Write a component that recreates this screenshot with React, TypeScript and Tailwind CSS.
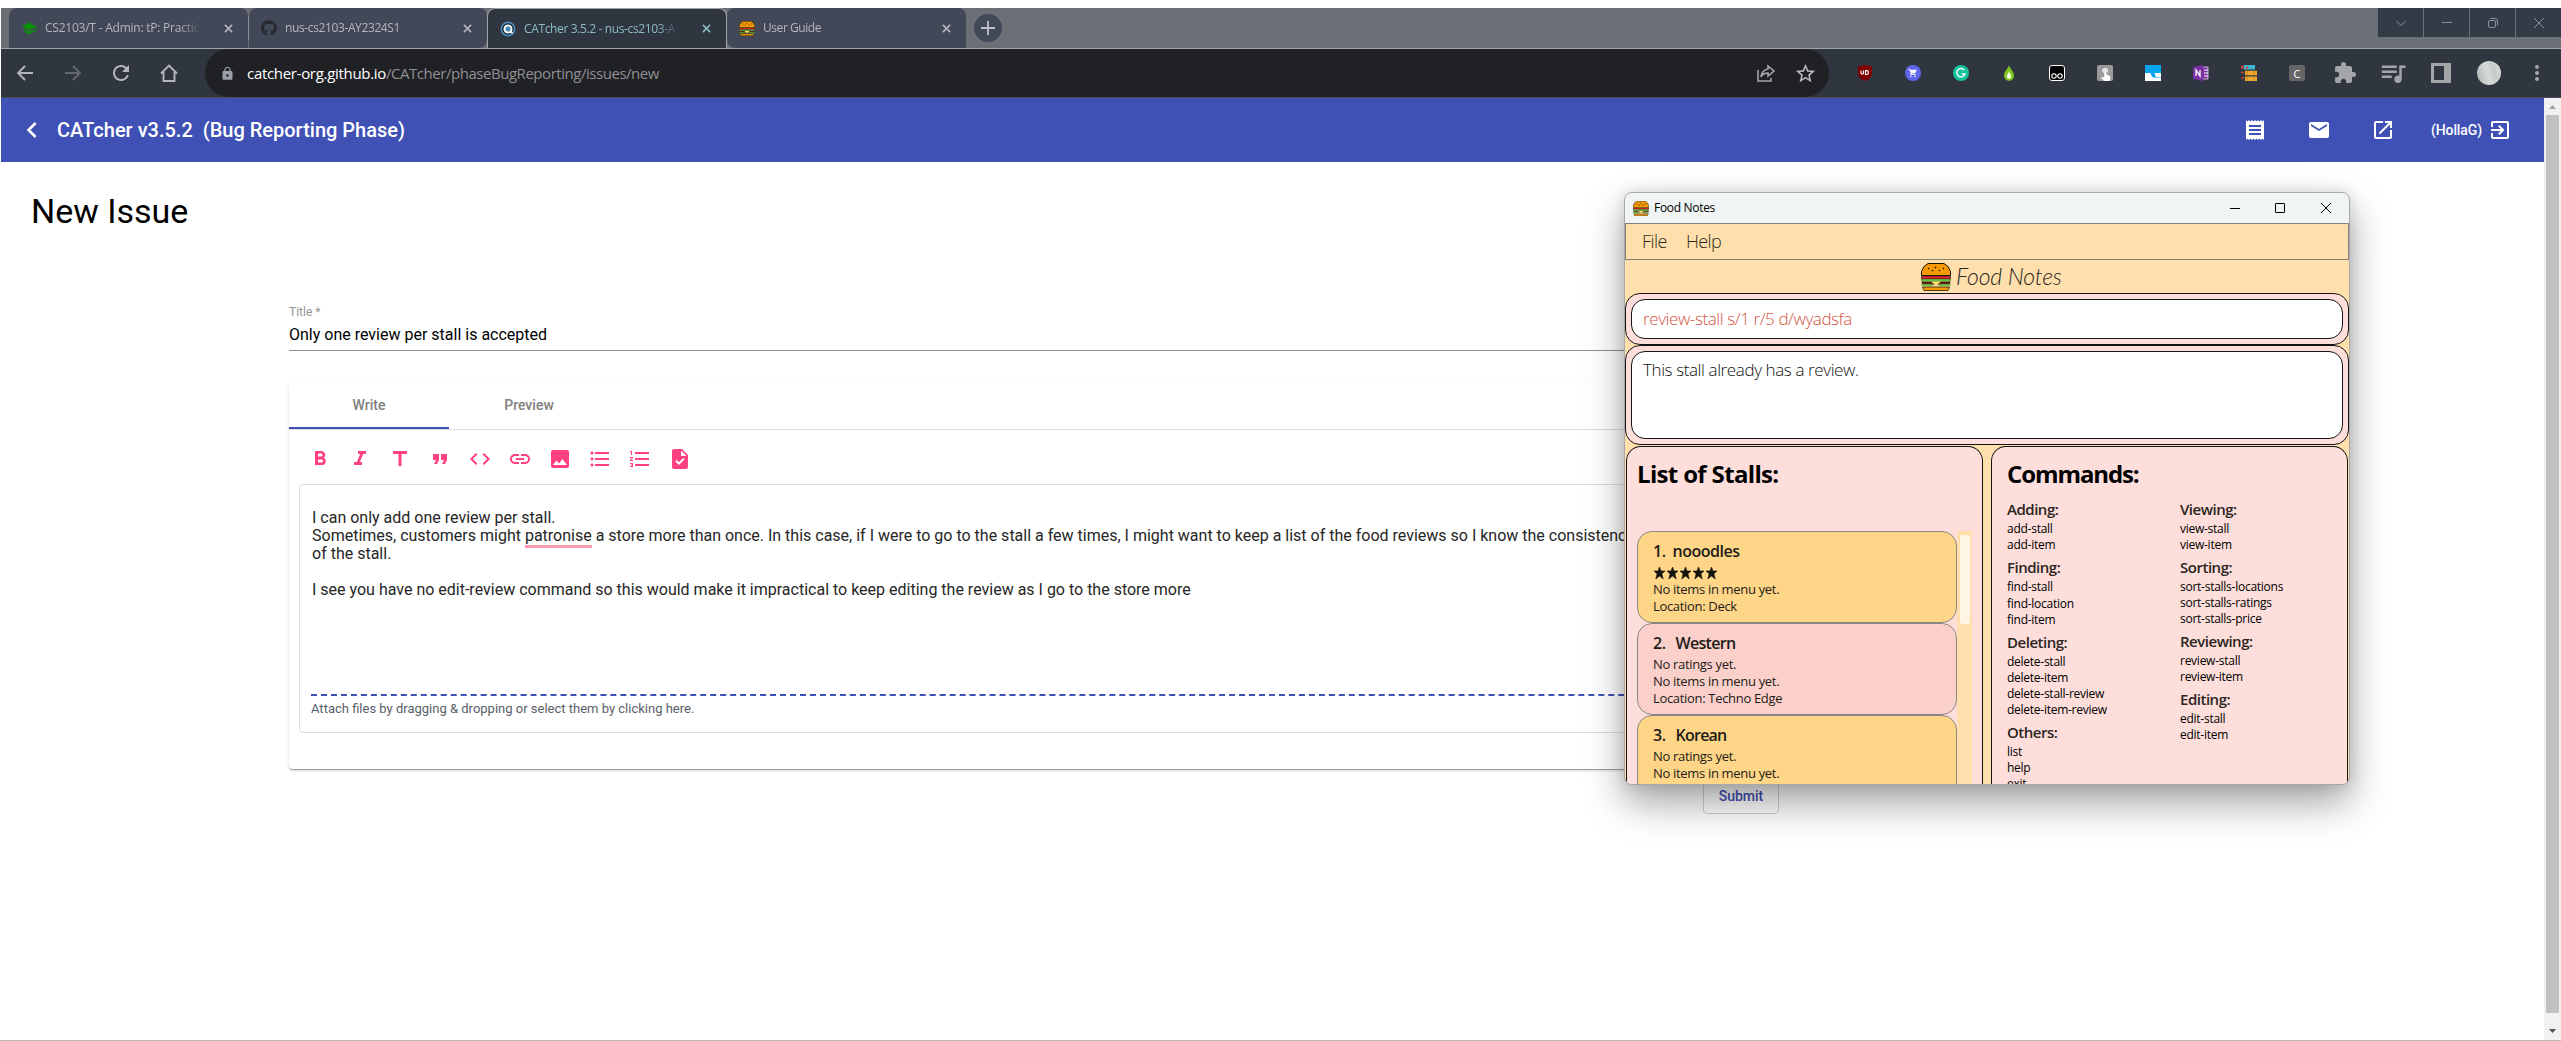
import React from 'react';
import {
  MdFormatBold, MdFormatItalic, MdTitle, MdFormatQuote, MdCode, MdInsertLink, MdImage,
  MdFormatListBulleted, MdFormatListNumbered, MdTask, MdReceipt, MdMail, MdOpenInNew,
  MdExitToApp, MdChevronLeft, MdExtension, MdLock, MdStarBorder, MdQueueMusic, MdMoreVert,
  MdSchool, MdRefresh, MdShoppingCart, MdTouchApp,
} from 'react-icons/md';
import { FaGithub } from 'react-icons/fa';

function Burger({ className }: { className: string }) {
  return (
    <svg viewBox="0 0 30 28" className={className} preserveAspectRatio="none">
      <path d="M7 .5h16l4 3 2.500 5v4H.500v-4l2.500-5z" fill="#f79a05" stroke="#1c1405" />
      <path d="M7 5h1v1H7zM14 4h1v1h-1zM22 5h1v1h-1zM11 7h1v1h-1zM18 7h1v1h-1z" fill="#1c1405" stroke="#1c1405" strokeWidth=".5" />
      <path d="M.5 13h29v3H.500z" fill="#d8262c" stroke="#1c1405" strokeWidth=".5" />
      <path d="M.5 16h29v2.500H.500z" fill="#63c843" stroke="#1c1405" strokeWidth=".3" />
      <path d="M1 19h28v2.500H1z" fill="#6b1f16" stroke="#1c1405" strokeWidth=".4" />
      <path d="M10 18.500h10l-5 4.500z" fill="#ffe066" />
      <path d="M.5 22.200h11M18 22.200h11.500" stroke="#63c843" strokeWidth="1.800" />
      <path d="M1.500 24h27l-1.500 3.500H3z" fill="#f79a05" stroke="#1c1405" strokeWidth=".8" />
    </svg>
  );
}

function CatcherIcon() {
  return (
    <svg viewBox="0 0 16 16" className="size-4">
      <circle cx="8" cy="8" r="7.500" fill="#4d8db5" />
      <circle cx="8" cy="8" r="5.800" fill="#0e1a24" />
      <circle cx="8" cy="8" r="3.600" fill="#4d8db5" stroke="#fff" strokeWidth="1.900" />
      <path d="M10.500 10.500l2 1.500" stroke="#fff" strokeWidth="1.800" />
    </svg>
  );
}

function Cross({ className }: { className: string }) {
  return (
    <svg viewBox="0 0 10 10" className={className}>
      <path d="M1 1l8 8M9 1l-8 8" fill="none" stroke="currentColor" strokeWidth="1.700" />
    </svg>
  );
}

type TabProps = { icon: React.ReactNode; title: string; tracking: string; tab: string };

function Tab({ icon, title, tracking, tab }: TabProps) {
  return (
    <div className={`flex h-full shrink-0 items-center pl-3 pr-[15px] ${tab}`}>
      <div className="mr-2 flex size-4 shrink-0 items-center justify-center">{icon}</div>
      <div className={`w-[156px] overflow-hidden whitespace-nowrap text-[12px] [mask-image:linear-gradient(to_right,black_134px,transparent_156px)] ${tracking}`}>{title}</div>
      <Cross className="ml-auto size-[9px]" />
    </div>
  );
}

function BrowserTabs() {
  return (
    <div className="flex h-[41px] border-b border-[#a0a3a8] bg-[#6b6f76] pl-2">
      <Tab icon={<MdSchool className="size-[17px] text-[#0a8f0a]" />} title="CS2103/T - Admin: tP: Practic" tracking="tracking-[-0.230px]" tab="w-[239px] rounded-t-lg bg-[#434858] text-[#b3b6be]" />
      <div className="my-auto h-6 w-px bg-[#8b8f97]" />
      <Tab icon={<FaGithub className="size-4 text-[#24292e]" />} title="nus-cs2103-AY2324S1" tracking="tracking-[-0.380px]" tab="w-[238px] rounded-t-lg rounded-br-lg bg-[#434858] text-[#b3b6be]" />
      <Tab icon={<CatcherIcon />} title="CATcher 3.5.2 - nus-cs2103-A" tracking="tracking-[-0.370px]" tab="-mb-px w-[240px] rounded-t-lg border border-b-0 border-[#a0a3a8] bg-[#2f3640] text-[#8dbcc2]" />
      <Tab icon={<Burger className="h-[15px] w-4" />} title="User Guide" tracking="tracking-[-0.440px]" tab="w-[239px] rounded-t-lg rounded-bl-lg bg-[#434858] text-[#b3b6be]" />
      <div className="ml-2 mt-[6px] flex size-7 items-center justify-center rounded-full bg-[#434858]">
        <svg viewBox="0 0 14 14" className="size-[14px]"><path d="M7 0v14M0 7h14" stroke="#bdc0c6" strokeWidth="1.800" /></svg>
      </div>
      <div className="ml-auto flex h-[29px] gap-px text-[#8d9199]">
        <div className="flex w-[45px] items-center justify-center bg-[#333b47]"><svg viewBox="0 0 10 6" className="h-[6px] w-[10px]"><path d="M0 .5l5 5 5-5" fill="none" stroke="currentColor" /></svg></div>
        <div className="flex w-[45px] items-center justify-center bg-[#333b47]"><div className="h-px w-[10px] bg-current" /></div>
        <div className="flex w-[45px] items-center justify-center bg-[#333b47]"><svg viewBox="0 0 10 10" className="size-[10px]"><rect x=".5" y="2.500" width="7" height="7" rx="1.500" fill="none" stroke="currentColor" /><path d="M2.500 .5H7a2.500 2.500 0 0 1 2.500 2.500v4.500" fill="none" stroke="currentColor" /></svg></div>
        <div className="flex w-[45px] items-center justify-center bg-[#333b47]"><svg viewBox="0 0 10 10" className="size-[10px]"><path d="M0 0l10 10M10 0L0 10" stroke="currentColor" /></svg></div>
      </div>
    </div>
  );
}

function Extensions() {
  return (
    <div className="flex items-center text-[#a3a5a8]">
      <div className="flex w-12 justify-center"><svg viewBox="0 0 16 16" className="size-4"><path d="M8 0l7 1.500v6c0 4.500-3 7-7 8.500-4-1.500-7-4-7-8.500v-6z" fill="#800000" /><path d="M4 5.500v2.700c0 .9 2.500.9 2.500 0V5.500M8.500 5v4.500h1.200c2.300 0 2.300-3.900 0-3.900H8.500" fill="none" stroke="#fff" strokeWidth="1.100" /></svg></div>
      <div className="flex w-12 justify-center"><div className="flex size-4 items-center justify-center rounded-full bg-[#5f66ea]"><MdShoppingCart className="size-[10px] text-white" /></div></div>
      <div className="flex w-12 justify-center"><svg viewBox="0 0 16 16" className="size-4"><circle cx="8" cy="8" r="8" fill="#15c39a" /><path d="M11.300 5A4.200 4.200 0 1 0 12 9H8.800" fill="none" stroke="#fff" strokeWidth="1.400" /></svg></div>
      <div className="flex w-12 justify-center"><svg viewBox="0 0 16 16" className="size-4"><path d="M8 0c1 4 5 6 5 10.500a5 5.300 0 0 1-10 0C3 6 7 4 8 0z" fill="#7cc520" /><path d="M8 6c.5 2.500 2.300 3.500 2.300 5.500a2.300 2.300 0 0 1-4.600 0C5.700 9.500 7.500 8.500 8 6z" fill="#f4ffe0" /></svg></div>
      <div className="flex w-12 justify-center"><svg viewBox="0 0 16 16" className="size-4"><rect x=".5" y=".5" width="15" height="15" rx="2.500" fill="#000" stroke="#fff" /><circle cx="5" cy="11" r="2.200" fill="none" stroke="#fff" strokeWidth="1.100" /><circle cx="11" cy="11" r="2.200" fill="none" stroke="#fff" strokeWidth="1.100" /></svg></div>
      <div className="flex w-12 justify-center"><div className="flex size-4 items-end justify-center rounded-xs bg-[#9b9b9b]"><MdTouchApp className="size-[15px] text-white" /></div></div>
      <div className="flex w-12 justify-center"><svg viewBox="0 0 16 16" className="size-4"><path d="M0 0h16v16H0z" fill="#00a4ef" /><path d="M0 8h5c1.500 0 1 4.500 4 4.500h7V16H0z" fill="#fff" /><path d="M9 8h7v4h-4c-2.500 0-1.500-3.500-3-4z" fill="#fff" /></svg></div>
      <div className="flex w-12 justify-center"><svg viewBox="0 0 16 16" className="size-4"><path d="M9 2h6v12H9z" fill="#7b2fa0" stroke="#e6d0f0" strokeWidth=".8" /><path d="M11 5h4M11 8h4M11 11h4" stroke="#fff" strokeWidth="1.200" /><path d="M0 2l10-2v16L0 14z" fill="#7b2fa0" /><path d="M3 11V5l4 6V5" fill="none" stroke="#fff" strokeWidth="1.300" /></svg></div>
      <div className="flex w-12 justify-center"><svg viewBox="0 0 16 16" className="size-4"><path d="M3 0h11v4.500H3z" fill="#3fb8cf" /><path d="M4 5.800h12v4.500H4zM4 11.500h12V16H4z" fill="#f0a830" /><path d="M0 1.500h2v1.500H0zM0 7.500h3M0 13h3" stroke="#c44" fill="#3fb8cf" strokeWidth="1.300" /><path d="M5 1.500h2v2H5z" fill="#e33" /><path d="M6 6v4M6 12v4M13 6v4M13 12v4" stroke="#c47d10" strokeWidth=".8" /></svg></div>
      <div className="flex w-12 justify-center"><div className="flex size-4 items-center justify-center rounded-xs bg-[#666] text-[11px] leading-none text-white">C</div></div>
      <div className="flex w-12 justify-center"><MdExtension className="size-6" /></div>
      <div className="flex w-12 justify-center"><MdQueueMusic className="size-[30px]" /></div>
      <div className="flex w-12 justify-center"><div className="h-5 w-5 border-y-[3px] border-l-[3px] border-r-[7px] border-[#a3a5a8]" /></div>
      <div className="flex w-12 justify-center"><div className="size-6 rounded-full bg-[linear-gradient(75deg,#a9b3b3,#d5dad8_45%,#c3cbc9_70%,#dfe3e1)]" /></div>
      <div className="flex w-12 justify-center"><MdMoreVert className="size-6" /></div>
    </div>
  );
}

function BrowserToolbar() {
  return (
    <div className="flex h-[49px] items-center border-b border-[#4c4f55] bg-[#2f3640]">
      <div className="flex w-[204px] items-center text-[#b4b6b9]">
        <svg viewBox="0 0 16 16" className="ml-4 size-4"><path d="M16 8H1M8 1L1 8l7 7" fill="none" stroke="currentColor" strokeWidth="1.900" /></svg>
        <svg viewBox="0 0 16 16" className="ml-8 size-4 text-[#63686f]"><path d="M0 8h15M8 1l7 7-7 7" fill="none" stroke="currentColor" strokeWidth="1.900" /></svg>
        <MdRefresh className="ml-7 size-6" />
        <svg viewBox="0 0 18 18" className="ml-[27px] size-[18px]"><path d="M1 9.500L9 1.500l8 8M3.500 8v9h11V8" fill="none" stroke="currentColor" strokeWidth="1.900" /></svg>
      </div>
      <div className="flex h-12 w-[1624px] items-center rounded-full bg-[#202124] pl-[15px] pr-3">
        <MdLock className="size-[15px] text-[#9aa0a6]" />
        <div className="ml-3 whitespace-nowrap text-[15px] leading-none text-white"><span className="tracking-[-0.310px]">catcher-org.github.io</span><span className="tracking-[-0.460px] text-[#8f9094]">/CATcher/phaseBugReporting/issues/new</span></div>
        <svg viewBox="0 0 18 18" className="ml-auto size-[18px] text-[#a3a5a8]"><path d="M1 6v11h13v-3M11 2l6 5-6 5V9C8 9 5.500 10 4 13c.2-4 3-7.500 7-8z" fill="none" stroke="currentColor" strokeWidth="1.600" /></svg>
        <MdStarBorder className="ml-[19px] size-[23px] text-[#b9bbbe]" />
      </div>
      <div className="ml-3"><Extensions /></div>
    </div>
  );
}

function AppHeader() {
  return (
    <header className="flex h-16 items-center bg-[#3f51b5] font-['Roboto',sans-serif] text-white">
      <MdChevronLeft className="ml-[15px] size-8" />
      <h1 className="ml-[9px] whitespace-pre text-[20px] font-medium leading-none">{'CATcher v3.5.2  (Bug Reporting Phase)'}</h1>
      <div className="ml-auto flex items-center pr-8">
        <MdReceipt className="size-6" />
        <MdMail className="ml-10 size-6" />
        <MdOpenInNew className="ml-10 size-6" />
        <span className="ml-9 text-[14px] font-medium leading-none tracking-[-0.100px]">(HollaG)</span>
        <MdExitToApp className="ml-[6px] size-6" />
      </div>
    </header>
  );
}

const tools = [MdFormatBold, MdFormatItalic, MdTitle, MdFormatQuote, MdCode, MdInsertLink, MdImage, MdFormatListBulleted, MdFormatListNumbered, MdTask];

function IssueForm() {
  return (
    <main className="flex h-[878px] flex-col bg-white pt-7 font-['Roboto',sans-serif] text-black">
      <h2 className="ml-[30px] h-[42px] text-[34px] leading-[42px]">New Issue</h2>
      <div className="ml-[288px] mr-[289px] mt-[72px]">
        <div className="h-4 text-[12px] leading-4 text-[#949494]">Title *</div>
        <div className="mt-[5px] h-[20px] text-[16px] leading-[20px] text-black">Only one review per stall is accepted</div>
        <div className="mt-[5px] h-px bg-[#8f8f8f]" />
        <section className="mt-[30px] h-[389px] rounded-sm border-b border-[#a0a0a0] shadow-[0_1px_3px_rgba(0,0,0,0.16)]">
          <div className="flex h-[49px] border-b border-[#dcdcdc] text-[14px] font-medium text-[#808080]">
            <div className="flex h-12 w-[160px] items-center justify-center border-b-2 border-[#3f51b5] pt-0.5">Write</div>
            <div className="flex h-12 w-[160px] items-center justify-center">Preview</div>
          </div>
          <div className="flex h-[54px] items-center pl-[10px] pt-1">
            {tools.map((Icon, i) => (
              <div key={i} className="flex w-[40px] justify-center pl-px text-[#ff4081]"><Icon className="size-6" /></div>
            ))}
          </div>
          <div className="mx-[10px] h-[249px] rounded border border-[#dcdcdc] px-[11px] pt-6">
            <div className="h-[187px] whitespace-nowrap border-b-2 border-dashed border-[#3f51b5] pl-px text-[16px] leading-[18px] text-[#262626]">
              <p>I can only add one review per stall.</p>
              <p>Sometimes, customers might <span className="shadow-[0_3px_0_#ff99ac]">patronise</span> a store more than once. In this case, if I were to go to the stall a few times, I might want to keep a list of the food reviews so I know the consistency</p>
              <p>of the stall.</p>
              <p className="mt-[18px]">I see you have no edit-review command so this would make it impractical to keep editing the review as I go to the store more</p>
            </div>
            <div className="mt-1 text-[13px] leading-[18px] text-[#586069]">Attach files by dragging &amp; dropping or select them by clicking here.</div>
          </div>
        </section>
        <div className="ml-[1414px] mt-2 flex h-9 w-[76px] items-center justify-center rounded border border-[#d0d0d0] text-[14px] font-medium text-[#3f51b5]">Submit</div>
      </div>
    </main>
  );
}

function Stars() {
  return (
    <div className="flex h-[17px] items-center gap-[2px] pl-px">
      {[0, 1, 2, 3, 4].map((i) => (
        <svg key={i} viewBox="0 0 11 12" className="h-3 w-[11px] overflow-visible"><path d="M5.500 0l1.500 4h4L7.900 6.800 9.200 12 5.500 9 1.800 12l1.300-5.200L0 4h4z" fill="#15130e" stroke="#15130e" strokeWidth=".6" /></svg>
      ))}
    </div>
  );
}

type Stall = { n: string; name: string; gap: string; bg: string; rated: boolean; location: string };
const stalls: Stall[] = [
  { n: '1.', name: 'nooodles', gap: 'ml-[7px] tracking-[-0.490px]', bg: 'bg-[#ffd587]', rated: true, location: 'Location: Deck' },
  { n: '2.', name: 'Western', gap: 'ml-[10px] tracking-[-0.680px]', bg: 'bg-[#fbd0ca]', rated: false, location: 'Location: Techno Edge' },
  { n: '3.', name: 'Korean', gap: 'ml-[10px] tracking-[-0.760px]', bg: 'bg-[#ffd587]', rated: false, location: '' },
];

function StallCard({ stall }: { stall: Stall }) {
  return (
    <div className={`h-[92px] shrink-0 rounded-[15px] border border-[#8a8684] pl-[15px] pt-[8px] text-[#1d1b18] ${stall.bg}`}>
      <div className="mb-[2px] flex h-[22px] items-center text-[16px] font-semibold"><span className="tracking-[-0.500px]">{stall.n}</span><span className={stall.gap}>{stall.name}</span></div>
      <div className="text-[13px] leading-[17px] tracking-[-0.320px]">
        {stall.rated ? <Stars /> : <p>No ratings yet.</p>}
        <p>No items in menu yet.</p>
        <p>{stall.location}</p>
      </div>
    </div>
  );
}

const leftCommands = [
  { title: 'Adding:', items: ['add-stall', 'add-item'] },
  { title: 'Finding:', items: ['find-stall', 'find-location', 'find-item'] },
  { title: 'Deleting:', items: ['delete-stall', 'delete-item', 'delete-stall-review', 'delete-item-review'] },
  { title: 'Others:', items: ['list', 'help', 'exit'] },
];
const rightCommands = [
  { title: 'Viewing:', items: ['view-stall', 'view-item'] },
  { title: 'Sorting:', items: ['sort-stalls-locations', 'sort-stalls-ratings', 'sort-stalls-price'] },
  { title: 'Reviewing:', items: ['review-stall', 'review-item'] },
  { title: 'Editing:', items: ['edit-stall', 'edit-item'] },
];

function CommandColumn({ groups }: { groups: { title: string; items: string[] }[] }) {
  return (
    <div className="w-[173px] shrink-0">
      {groups.map((g) => (
        <div key={g.title} className="mb-[3px]">
          <h4 className="mb-px h-[22px] text-[15px] font-semibold leading-[22px] tracking-[-0.480px] text-[#2b2523]">{g.title}</h4>
          {g.items.map((item) => (
            <p key={item} className={`text-[12px] leading-4 tracking-[-0.260px] text-black ${item === 'find-stall' ? 'h-[17px]' : 'h-4'}`}>{item}</p>
          ))}
        </div>
      ))}
    </div>
  );
}

function FoodNotesWindow() {
  return (
    <div className="absolute left-[1624px] top-[192px] flex h-[593px] w-[726px] flex-col overflow-hidden rounded-lg border border-[#a8a8a8] bg-[#ffe0ad] shadow-[0_18px_38px_rgba(0,0,0,0.36),0_0_14px_rgba(0,0,0,0.12)]">
      <div className="flex h-[30px] shrink-0 items-center bg-[#f1f4f4] pl-2 pr-[18px]">
        <Burger className="h-[15px] w-4" />
        <span className="ml-[5px] text-[12px] leading-none tracking-[-0.310px] text-black">Food Notes</span>
        <div className="ml-auto h-px w-[10px] bg-black" />
        <div className="ml-[35px] size-[10px] rounded-[1px] border border-black" />
        <svg viewBox="0 0 10 10" className="ml-9 size-[10px]"><path d="M0 0l10 10M10 0L0 10" stroke="#000" /></svg>
      </div>
      <div className="flex h-[37px] shrink-0 items-center border border-[#858078] pl-4 text-[18px] font-light text-[#2e2a22]">
        <span className="w-11 tracking-[-0.520px]">File</span>
        <span className="tracking-[-0.650px]">Help</span>
      </div>
      <div className="flex h-[33px] shrink-0 items-center pl-[296px]">
        <Burger className="h-7 w-[30px]" />
        <span className="ml-[5px] font-['Lato',sans-serif] text-[23px] font-light italic leading-none tracking-[-0.150px] text-[#2b261c]">Food Notes</span>
      </div>
      <div className="h-[52px] shrink-0 rounded-[15px] border border-[#141414] bg-[#fddeda] p-[5px]">
        <div className="flex h-10 items-center rounded-[14px] border border-[#141414] bg-white pl-[11px] text-[17px] font-light tracking-[-0.400px] text-[#d4553f]">review-stall s/1 r/5 d/wyadsfa</div>
      </div>
      <div className="h-[100px] shrink-0 rounded-[15px] border border-[#141414] bg-[#fddeda] p-[5px]">
        <div className="h-[88px] rounded-[14px] border border-[#141414] bg-white pl-[11px] pt-[6px] text-[17px] font-light leading-[24px] tracking-[-0.390px] text-[#111]">This stall already has a review.</div>
      </div>
      <div className="mt-px flex min-h-0 flex-1 px-px">
        <section className="flex w-[357px] shrink-0 flex-col rounded-t-[15px] border border-b-0 border-[#141414] bg-[#fddeda] px-[10px]">
          <h3 className="mt-[11px] h-8 shrink-0 text-[24px] font-bold leading-8 tracking-[-0.660px] text-black">List of Stalls:</h3>
          <div className="mt-[41px] flex min-h-0 flex-1">
            <div className="flex w-[320px] flex-col overflow-hidden">
              {stalls.map((s) => <StallCard key={s.name} stall={s} />)}
            </div>
            <div className="w-[15px] bg-[#ffe0ad] pl-[3px] pt-1"><div className="h-[89px] w-[10px] rounded-[3px] bg-[#fff5e6]" /></div>
          </div>
        </section>
        <section className="ml-2 flex w-[357px] shrink-0 flex-col overflow-hidden rounded-t-[15px] border border-b-0 border-[#141414] bg-[#fddeda] pl-[15px]">
          <h3 className="mt-[11px] h-8 shrink-0 text-[24px] font-bold leading-8 tracking-[-1.100px] text-black">Commands:</h3>
          <div className="mt-2 flex">
            <CommandColumn groups={leftCommands} />
            <CommandColumn groups={rightCommands} />
          </div>
        </section>
      </div>
    </div>
  );
}

export default function App() {
  return (
    <div className="relative h-[1041px] w-[2561px] overflow-hidden border-b border-[#b5b5b5] bg-white pl-px pt-2 font-['Open_Sans','Noto_Sans',sans-serif]">
      <BrowserTabs />
      <BrowserToolbar />
      <div className="flex h-[942px]">
        <div className="flex-1">
          <AppHeader />
          <IssueForm />
        </div>
        <div className="flex w-[17px] flex-col items-center bg-[#f1f1f1]">
          <svg viewBox="0 0 7 4" className="mt-[7px] h-1 w-[7px]"><path d="M0 4L3.500 0 7 4z" fill="#a3a3a3" /></svg>
          <div className="mt-[6px] h-[898px] w-[13px] bg-[#c1c1c1]" />
          <svg viewBox="0 0 7 4" className="mt-4 h-1 w-[7px]"><path d="M0 0l3.500 4L7 0z" fill="#505050" /></svg>
        </div>
      </div>
      <FoodNotesWindow />
    </div>
  );
}
